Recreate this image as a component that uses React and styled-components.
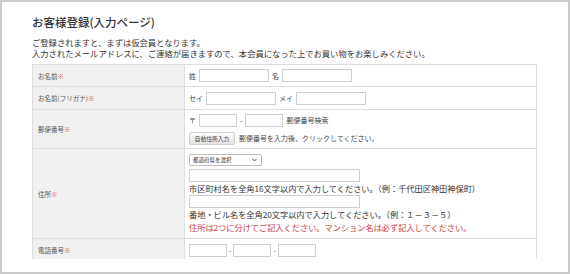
import * as React from 'react';
import styled, { createGlobalStyle } from 'styled-components';

const GlobalStyle = createGlobalStyle`
  html, body {
    margin: 0;
    padding: 0;
    background: #fff;
  }
  body {
    font-family: "Noto Sans CJK JP", "Noto Sans", sans-serif;
    color: #333;
  }
`;

const Frame = styled.div`
  width: 570px;
  height: 274px;
  box-sizing: border-box;
  border: 2px solid #cbcbcb;
  padding-bottom: 13px;
  display: flex;
  flex-direction: column;
`;

const Viewport = styled.div`
  flex: 1;
  min-height: 0;
  overflow: hidden;
  padding: 13px 31px 0 30px;
`;

const Title = styled.h1`
  margin: 0 0 7px;
  font-size: 11.5px;
  line-height: 15px;
  font-weight: 500;
  color: #333;
`;

const Intro = styled.p`
  margin: 0 0 6px;
  font-size: 8.3px;
  line-height: 10.5px;
  color: #333;
`;

const Table = styled.table`
  width: 100%;
  border-collapse: collapse;
  border: 1px solid #dedede;
`;

const Label = styled.th`
  width: 141px;
  height: ${p => p.$h}px;
  padding: 0 5px;
  background: #f1f1f1;
  border: 1px solid #dedede;
  text-align: left;
  vertical-align: middle;
  font-size: 6.5px;
  font-weight: 400;
  color: #555;
`;

const Req = styled.span`
  color: #e35d60;
`;

const Cell = styled.td`
  padding: 0 4px;
  border: 1px solid #dedede;
  vertical-align: middle;
`;

const Line = styled.div`
  display: flex;
  align-items: center;
  gap: ${p => p.$gap ?? 3}px;
  height: 13px;
  margin-top: ${p => p.$mt ?? 0}px;
  font-size: 7px;
  color: #444;
`;

const Input = styled.span`
  display: inline-block;
  width: ${p => p.$w}px;
  height: 13px;
  box-sizing: border-box;
  border: 1px solid #cfcfcf;
  background: #fff;
`;

const Button = styled.span`
  display: inline-flex;
  align-items: center;
  justify-content: center;
  width: 46px;
  height: 13px;
  box-sizing: border-box;
  border: 1px solid #cfcfcf;
  border-radius: 2px;
  background: linear-gradient(#fbfbfb, #e4e4e4);
  font-size: 5.8px;
  color: #444;
  margin-right: 1px;
`;

const Select = styled.span`
  display: flex;
  align-items: center;
  justify-content: space-between;
  width: 73px;
  height: 12px;
  box-sizing: border-box;
  padding: 0 4px 0 3px;
  border: 1px solid #bdbdbd;
  border-radius: 2px;
  background: #fff;
  font-size: 5.5px;
  color: #333;
  margin-bottom: 3px;
`;

const Note = styled.div`
  height: 13px;
  line-height: 13px;
  font-size: 8.2px;
  white-space: nowrap;
  color: ${p => (p.$warn ? '#d23c3f' : '#333')};
`;

const Stack = styled.div`
  display: flex;
  flex-direction: column;
  align-items: flex-start;
`;

function Chevron() {
  return (
    <svg width="5" height="4" viewBox="0 0 10 7">
      <path d="M1 1.5 L5 5.5 L9 1.5" fill="none" stroke="#333" strokeWidth="1.8" />
    </svg>
  );
}

export default function App() {
  return (
    <>
      <GlobalStyle />
      <Frame>
        <Viewport>
          <Title>お客様登録(入力ページ)</Title>
          <Intro>
            ご登録されますと、まずは仮会員となります。
            <br />
            入力されたメールアドレスに、ご連絡が届きますので、本会員になった上でお買い物をお楽しみください。
          </Intro>
          <Table>
            <tbody>
              <tr>
                <Label $h={21}>お名前<Req>※</Req></Label>
                <Cell>
                  <Line>
                    姓<Input $w={70} />
                    名<Input $w={70} />
                  </Line>
                </Cell>
              </tr>
              <tr>
                <Label $h={22}>お名前(フリガナ)<Req>※</Req></Label>
                <Cell>
                  <Line>
                    セイ<Input $w={70} />
                    メイ<Input $w={70} />
                  </Line>
                </Cell>
              </tr>
              <tr>
                <Label $h={38}>郵便番号<Req>※</Req></Label>
                <Cell>
                  <Line>
                    〒<Input $w={38} />-<Input $w={38} />
                    郵便番号検索
                  </Line>
                  <Line $mt={5}>
                    <Button>自動住所入力</Button>
                    郵便番号を入力後、クリックしてください。
                  </Line>
                </Cell>
              </tr>
              <tr>
                <Label $h={89}>住所<Req>※</Req></Label>
                <Cell>
                  <Stack>
                    <Select>
                      都道府県を選択
                      <Chevron />
                    </Select>
                    <Input $w={171} />
                    <Note>市区町村名を全角16文字以内で入力してください。（例：千代田区神田神保町）</Note>
                    <Input $w={171} />
                    <Note>番地・ビル名を全角20文字以内で入力してください。（例：１－３－５）</Note>
                    <Note $warn>住所は2つに分けてご記入ください。マンション名は必ず記入してください。</Note>
                  </Stack>
                </Cell>
              </tr>
              <tr>
                <Label $h={22}>電話番号<Req>※</Req></Label>
                <Cell>
                  <Line $gap={2}>
                    <Input $w={38} />-<Input $w={38} />-<Input $w={38} />
                  </Line>
                </Cell>
              </tr>
            </tbody>
          </Table>
        </Viewport>
      </Frame>
    </>
  );
}
